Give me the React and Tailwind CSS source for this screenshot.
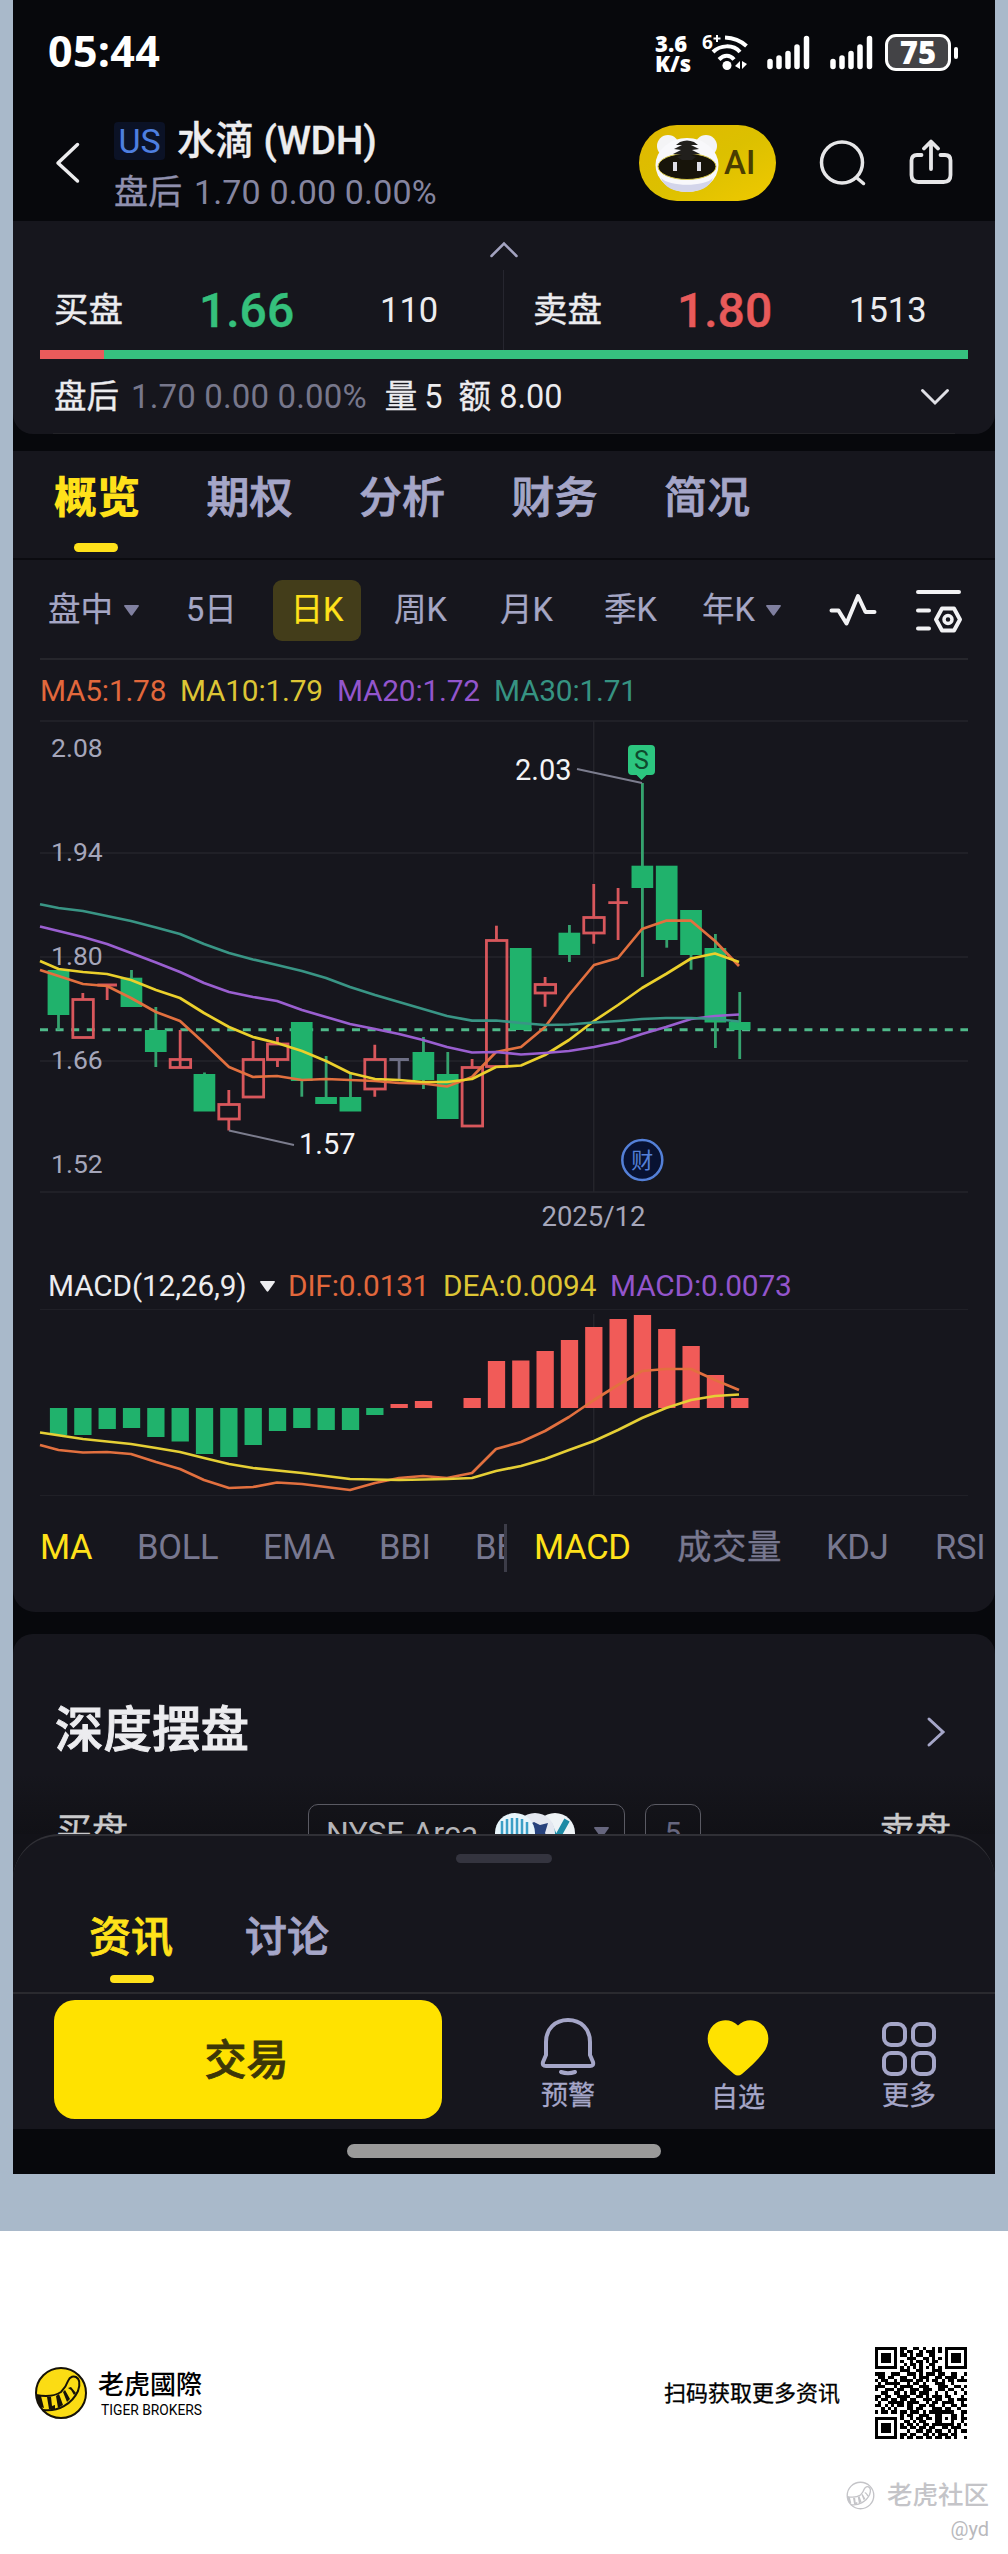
import React from 'react';

const MAIN_TABS = ['概览', '期权', '分析', '财务', '简况'];

// x of the first candle and distance between candles
const X0 = 58.5;
const STEP = 24.33;

// [kind, bodyTop, bodyBottom, wickTop, wickBottom]
const CANDLES = [
  ['g', 970, 1015, 970, 1030],
  ['r', 999, 1038, 993, 1038],
  ['rd', 985, 985, 985, 1000],
  ['g', 977.7, 1007, 970, 1007],
  ['g', 1030, 1052, 1007, 1067],
  ['r', 1059, 1068, 1030, 1059],
  ['g', 1074, 1111.5, 1072.5, 1111],
  ['r', 1104, 1119.5, 1090, 1130.5],
  ['r', 1059, 1097.5, 1041, 1097],
  ['r', 1043.5, 1060, 1037, 1067],
  ['g', 1022, 1081, 1022, 1096.7],
  ['g', 1097, 1104, 1056, 1104],
  ['g', 1097, 1111.5, 1072.7, 1111],
  ['r', 1059, 1089.5, 1044.7, 1096.7],
  ['n', 1059.5, 1059.5, 1059.5, 1081],
  ['g', 1052, 1080, 1037, 1089],
  ['g', 1074, 1119, 1052, 1119],
  ['r', 1067, 1126.5, 1059, 1126],
  ['r', 940, 1067, 925.7, 1067],
  ['g', 948, 1030, 948, 1030],
  ['r', 984, 993.5, 977, 1006.7],
  ['g', 932.7, 955, 925, 962],
  ['r', 917, 933.5, 884, 943.7],
  ['rd', 902.7, 902.7, 888, 940],
  ['g', 865.7, 888, 783, 977],
  ['g', 865.7, 940, 866, 947.7],
  ['g', 910, 955, 910, 969.7],
  ['g', 948, 1022.5, 934, 1048],
  ['g', 1022, 1030, 992, 1059],
];

const MA30 = '40,904.3 58.5,908 83,911 107,916 131,921 156,927.5 180,934 204,944 229,953 253,959.5 277,965 302,971 326,978 350,987 375,995 399,1002 423,1009 447,1016 472,1020.7 496,1020.5 521,1023 545,1025 569,1024.5 594,1022.5 618,1021 642,1019 666,1018 691,1018 715,1019 739,1021.5';
const MA20 = '40,926.5 83,937 107,944 131,953 156,962.5 180,972 204,983 229,992 253,997 277,1001 302,1010 326,1017 350,1024 375,1029 399,1034 423,1040 447,1047 472,1052.5 496,1052 521,1054.5 545,1053 569,1051 594,1047 618,1042 642,1034 666,1027 691,1019 715,1016 739,1014.5';
const MA10 = '40,961 58.5,969 83,972 107,974 131,980 156,990 180,998 204,1013 229,1027 253,1037 277,1043 302,1051 326,1061 350,1073 375,1079 399,1080 423,1082 447,1082 472,1079 496,1067 521,1065.5 545,1055 569,1040 594,1021 618,1005 642,988 666,974 691,958.5 715,953.5 739,962';
const MA5 = '40,970 58.5,976 83,984 107,986 131,998 156,1012 180,1021 204,1043 229,1067 253,1077 277,1076 302,1080 326,1079 350,1080 375,1081 399,1083 423,1083.5 447,1086.5 472,1077 496,1052 521,1047 545,1027 569,995 594,965 618,958 642,929 666,920.7 691,920.7 715,941 739,966';

const HIST = [-27, -27, -21, -20, -29, -33.5, -46, -49, -37, -23, -20, -22, -22, -7, 4, 7, 0, 10, 47, 47.5, 57, 68, 81, 89, 93, 79, 62, 33, 10];
const DIF = '40,1445 58.5,1450 83,1452.5 107,1452 131,1454 156,1462 180,1469 204,1480 229,1488 253,1487 277,1482.5 302,1484 326,1487 350,1490 375,1483 399,1478 423,1476 447,1478 472,1473 496,1449 521,1442 545,1431 569,1417 594,1400 618,1385 642,1371 666,1369 691,1369 715,1380 739,1390';
const DEA = '40,1432.5 83,1439 131,1444 156,1448 180,1452 204,1458 229,1464 253,1468 302,1473 350,1479 399,1480 447,1479 472,1478 496,1471 521,1466 545,1459 569,1450 594,1441 618,1430 642,1418 666,1408 691,1400 715,1396 739,1394.5';

const PRICES = [
  ['2.08', 757],
  ['1.94', 861],
  ['1.80', 965],
  ['1.66', 1068.5],
  ['1.52', 1172.5],
];

const QR = [
  '11111110110011010010101111111',
  '10000010101100101110101000001',
  '10111010110101100110001011101',
  '10111010001110011010101011101',
  '10111010100101101011001011101',
  '10000010010110100110001000001',
  '11111110101010101010101111111',
  '00000000111001100011100000000',
  '11100111001110101110110011001',
  '01101100110010111001101111010',
  '10110010111101101011010110111',
  '01011111001011010001110010000',
  '11100010111100111000111001101',
  '10011101100111011100110110010',
  '00110011010110111001001001001',
  '11011001111001101011101100010',
  '10110110110110011101100110111',
  '01001111101111001011011110010',
  '11010101101100110110010011011',
  '00101010001101100011101100100',
  '10110110110111010111111110011',
  '00000000101100111001100011010',
  '11111110100101101101101011011',
  '10000010011010110001100010010',
  '10111010101101011011111110101',
  '10111010110110110110011011100',
  '10111010001001101101100101011',
  '10000010110110011010111011000',
  '11111110101101101101101101001',
];

function StatusBar() {
  return (
    <div className="flex h-[98px] items-start pl-[35px] pr-[37px] pt-[34px] text-white">
      <div className="font-['Open_Sans'] text-[43px] font-bold leading-[34px] tracking-[0.3px]">05:44</div>
      <div className="ml-auto flex items-start">
        <div className="w-[47px] font-['Open_Sans'] text-[22px] font-extrabold leading-[20px]">
          <div className="-mt-px">3.6</div>
          <div>K/s</div>
        </div>
        <svg className="h-[38px] w-[50px] overflow-visible" viewBox="0 0 50 38" fill="none" stroke="#fff">
          <text x="0" y="15" fontSize="19" fontWeight="700" fontFamily="Open Sans" fill="#fff" stroke="none">6</text>
          <path d="M11.500 4.500h7M15 1v7" strokeWidth="2" />
          <path d="M23 3.500c8 .3 16 3.500 21.500 8.500" strokeWidth="4" />
          <path d="M11 18c7-7 20-8 27 0" strokeWidth="4" />
          <path d="M17 25.500c5-5 11-5 15 0" strokeWidth="4" />
          <circle cx="25" cy="31.500" r="4.500" fill="#fff" stroke="none" />
          <path d="M38 27v8l-5-3zM40 27v8l5-5z" fill="#fff" stroke="none" />
        </svg>
        <SignalBars className="ml-[15px]" />
        <SignalBars className="ml-[20px]" />
        <div className="ml-[12px] flex items-center">
          <div className="flex h-[37px] w-[66px] items-center justify-center rounded-[11px] border-[3px] border-white bg-[#434346] font-['Open_Sans'] text-[31px] font-extrabold leading-none">
            75
          </div>
          <div className="ml-[3px] h-[12px] w-[4px] rounded-full bg-white" />
        </div>
      </div>
    </div>
  );
}

function SignalBars({ className }) {
  return (
    <svg className={`h-[36px] w-[43px] ${className}`} viewBox="0 0 43 36" stroke="#fff" strokeWidth="5.500" strokeLinecap="round">
      <path d="M3 27.500v5M12 24v8.500M21 19.500v13M30 13v19.500M39.500 4.500v28" />
    </svg>
  );
}

function TigerBot() {
  return (
    <svg className="h-[62px] w-[68px]" viewBox="0 0 68 62">
      <circle cx="15" cy="14" r="11" fill="#f4f4f6" />
      <circle cx="53" cy="14" r="11" fill="#f4f4f6" />
      <ellipse cx="34" cy="33" rx="31.500" ry="27" fill="#f8f8fb" />
      <path d="M8 46c8 9 44 9 52 0-3 9-13 14-26 14S11 55 8 46z" fill="#d3d5ea" />
      <ellipse cx="34" cy="34.500" rx="29" ry="13" fill="#17140a" stroke="#d9c94a" strokeWidth="1" />
      <path d="M27 10q7-3 14 0l4 3-7 0 8 4-7 1 8 4-9 1 5 2-4 3H29l-5-3 5-2-9-1 8-4-7-1 8-4-6 0z" fill="#211f1c" />
      <rect x="20" y="30" width="4" height="9" fill="#dedee6" />
      <rect x="44" y="30" width="4" height="9" fill="#dedee6" />
    </svg>
  );
}

function Header() {
  return (
    <div className="flex h-[123px] items-start">
      <svg className="ml-[42px] mt-[44px] h-[42px] w-[26px]" viewBox="0 0 26 42" fill="none" stroke="#ececee" strokeWidth="3.5" strokeLinecap="round" strokeLinejoin="round">
        <path d="M22.500 2.500L3 21l19.500 18" />
      </svg>
      <div className="ml-[33px] mt-[20px] whitespace-nowrap">
        <div className="flex h-[46px] items-center">
          <div className="flex h-[38px] w-[51px] items-center justify-center rounded-[4px] bg-[#0b1226] text-[34px] leading-none text-[#4e7fe0]">US</div>
          <div className="ml-[12px] text-[38.500px] font-medium leading-none text-[#ededef] [-webkit-text-stroke:0.4px]">水滴 (WDH)</div>
        </div>
        <div className="mt-[5px] text-[34px] leading-[46px] tracking-[0.150px] text-[#8585a0]">
          <span className="text-[#8f90ae] [-webkit-text-stroke:0.3px]">盘后</span> <span className="ml-[3px]">1.70 0.00 0.00%</span>
        </div>
      </div>
      <div className="ml-auto mt-[27px] flex h-[76px] w-[137px] items-center rounded-full bg-linear-to-br from-[#e0b800] via-[#dcc000] to-[#efc900] pl-[14px] text-[33px] text-[#4a3d00]">
        <TigerBot />
        <span className="ml-[3px] font-medium">AI</span>
      </div>
      <svg className="ml-[43px] mt-[42px] h-[47px] w-[47px]" viewBox="0 0 47 47" fill="none" stroke="#e6e6e8" strokeWidth="3.500" strokeLinecap="round">
        <circle cx="23" cy="22.500" r="20.500" />
        <path d="M38 38l6.500 5.500" />
      </svg>
      <svg className="ml-[43px] mr-[42px] mt-[41px] h-[46px] w-[44px]" viewBox="0 0 44 46" fill="none" stroke="#e6e6e8" strokeWidth="3.800" strokeLinecap="round" strokeLinejoin="round">
        <path d="M12.500 16H8q-5.500 0-5.500 5.500V36q0 7 7 7h25q7 0 7-7V21.500Q41.500 16 36 16h-4.500" />
        <path d="M22 30V3M15 9.500L22 2.500l7 7" />
      </svg>
    </div>
  );
}

function QuoteCard() {
  return (
    <div className="h-[213px] rounded-b-[20px] bg-[#16161d] text-[#ececef]">
      <div className="flex h-[49px] justify-center pt-[19px]">
        <svg className="h-[18px] w-[30px]" viewBox="0 0 30 18" fill="none" stroke="#a3a3c0" strokeWidth="2.500" strokeLinecap="round">
          <path d="M2.500 16L15 3.500 27.500 16" />
        </svg>
      </div>
      <div className="flex h-[80px] items-center">
        <div className="flex h-full w-[491px] items-center border-r border-[#26262f] pl-[41px] pt-[2px]">
          <span className="w-[145px] text-[34.500px] [-webkit-text-stroke:0.4px]">买盘</span>
          <span className="w-[181px] text-[48px] font-medium leading-none text-[#35c07c] [-webkit-text-stroke:0.4px]">1.66</span>
          <span className="text-[34.500px]">110</span>
        </div>
        <div className="flex items-center pl-[29px] pt-[2px]">
          <span className="w-[144px] text-[34.500px] [-webkit-text-stroke:0.4px]">卖盘</span>
          <span className="w-[172px] text-[48px] font-medium leading-none text-[#e85a5a] [-webkit-text-stroke:0.4px]">1.80</span>
          <span className="text-[34.500px]">1513</span>
        </div>
      </div>
      <div className="mx-[27px] flex h-[9px]">
        <div className="w-[64px] bg-[#ea5b5b]" />
        <div className="flex-1 bg-[#36c07f]" />
      </div>
      <div className="flex h-[74px] items-center whitespace-pre pl-[41px] pr-[45px] pt-[2px] text-[32.500px]">
        <span className="[-webkit-text-stroke:0.4px]">盘后</span>
        <span className="ml-[12px] text-[33px] tracking-[0.150px] text-[#77778b]">1.70 0.00 0.00%</span>
        <span className="ml-[18px] [-webkit-text-stroke:0.4px]">量</span>
        <span className="ml-[7px]">5</span>
        <span className="ml-[16px] [-webkit-text-stroke:0.4px]">额</span>
        <span className="ml-[8px]">8.00</span>
        <svg className="ml-auto h-[19px] w-[30px]" viewBox="0 0 30 19" fill="none" stroke="#e0e0e6" strokeWidth="3" strokeLinecap="round">
          <path d="M2.500 2.500L15 15 27.500 2.500" />
        </svg>
      </div>
      <div className="mx-[40px] h-px bg-[#222227]" />
    </div>
  );
}

function Caret({ className }) {
  return (
    <svg className={`h-[11px] w-[15px] ${className}`} viewBox="0 0 15 11" fill="currentColor">
      <path d="M1 0h13q1.500 0 .6 1.500L8.500 10q-1 1.300-2 0L.4 1.500Q-.5 0 1 0z" />
    </svg>
  );
}

function IntervalRow() {
  return (
    <div className="flex h-[98px] items-center pt-[2px] text-[32.500px] text-[#a5a6c4] [-webkit-text-stroke:0.2px]">
      <div className="flex w-[137px] items-center pl-[35px]">盘中<Caret className="ml-[11px] text-[#8080a0]" /></div>
      <div className="w-[123px] pl-[36px]">5日</div>
      <div className="flex h-[61px] w-[88px] items-center justify-center rounded-[9px] bg-[#433d1a] text-[#ffe11a]">日K</div>
      <div className="ml-[33px] w-[106px]">周K</div>
      <div className="w-[104px]">月K</div>
      <div className="w-[98px]">季K</div>
      <div className="flex w-[127px] items-center">年K<Caret className="ml-[11px] text-[#8080a0]" /></div>
      <svg className="h-[36px] w-[48px]" viewBox="0 0 48 36" fill="none" stroke="#f2f2f4" strokeWidth="4" strokeLinecap="round" strokeLinejoin="round">
        <path d="M2.500 18.500h7l8 13L29 4l7.500 16h9" />
      </svg>
      <svg className="ml-[38px] h-[45px] w-[48px]" viewBox="0 0 48 45" fill="none" stroke="#f2f2f4" strokeWidth="4" strokeLinecap="round" strokeLinejoin="round">
        <path d="M3 4h41M3 22.500h11M3 40.500h11" />
        <path d="M27 20.500h12l6 11-6 11H27l-6-11z" />
        <circle cx="33" cy="31.500" r="4" strokeWidth="3.500" />
      </svg>
    </div>
  );
}

function PriceChart() {
  return (
    <svg className="h-[536px] w-[982px]" viewBox="13 720 982 536" fontFamily="Roboto, 'Noto Sans CJK SC', sans-serif">
      <g stroke="#24242b" strokeWidth="1.500">
        {[721, 853, 957, 1061, 1192].map((y) => (
          <path key={y} d={`M40 ${y}H968`} />
        ))}
        <path d="M593.700 721V1192" />
      </g>
      <path d="M40 1029.700H968" stroke="#4fb98a" strokeWidth="3" strokeDasharray="8 7.600" />
      {CANDLES.map(([kind, top, bottom, high, low], i) => {
        const x = X0 + i * STEP;
        if (kind === 'g') {
          return (
            <g key={i}>
              <path d={`M${x} ${high}V${low}`} stroke="#35a36e" strokeWidth="2.800" />
              <rect x={x - 10.9} y={top} width="21.700" height={bottom - top} fill="#20b26c" />
            </g>
          );
        }
        if (kind === 'r') {
          return (
            <g key={i} stroke="#d8575c" strokeWidth="2.800" fill="none">
              <path d={`M${x} ${high}V${top}M${x} ${bottom}V${low}`} />
              <rect x={x - 10} y={top + 0.5} width="20.500" height={bottom - top - 1} />
            </g>
          );
        }
        return (
          <path key={i} d={`M${x - 9.8} ${top}h19.600M${x} ${high}V${low}`} stroke={kind === 'n' ? '#6e6f85' : '#d8575c'} strokeWidth="2.800" />
        );
      })}
      <g fill="none" strokeWidth="2.700" strokeLinejoin="round">
        <polyline points={MA5} stroke="#e2703f" />
        <polyline points={MA10} stroke="#ebd02c" />
        <polyline points={MA20} stroke="#9a5fd0" />
        <polyline points={MA30} stroke="#399585" />
      </g>
      <g fill="#a5a6ba" fontSize="26.500">
        {PRICES.map(([label, y]) => (
          <text key={label} x="51" y={y}>{label}</text>
        ))}
        <text x="593.500" y="1225.500" fontSize="27.500" textAnchor="middle">2025/12</text>
      </g>
      <path d="M577 769l65 14M229 1130.500l65 14.500" stroke="#7c7d8e" strokeWidth="2" />
      <g fill="#f4f4f6" fontSize="29">
        <text x="515" y="779.500">2.03</text>
        <text x="299" y="1154">1.57</text>
      </g>
      <path d="M632 745h19q4 0 4 4v22q0 4-4 4h-4.500l-5 5-5-5H632q-4 0-4-4v-22q0-4 4-4z" fill="#2cc67f" />
      <text x="641.500" y="769" fontSize="25" textAnchor="middle" fill="#0e4a2d">S</text>
      <circle cx="642.300" cy="1160" r="20" fill="#081232" stroke="#5480d8" strokeWidth="2.500" />
      <text x="642.300" y="1168" fontSize="22" textAnchor="middle" fill="#5480d8">财</text>
    </svg>
  );
}

function MacdChart() {
  return (
    <svg className="h-[190px] w-[982px]" viewBox="13 1308 982 190">
      <path d="M40 1309.500H968M40 1495.500H968" stroke="#202027" strokeWidth="1.200" />
      <path d="M593.700 1314V1495" stroke="#24242b" strokeWidth="1.500" />
      {HIST.map((v, i) => (
        <rect
          key={i}
          x={X0 + i * STEP - 8.6}
          y={v > 0 ? 1408 - v : 1408}
          width="17.300"
          height={Math.abs(v)}
          fill={v > 0 ? '#f15b58' : '#20b26c'}
        />
      ))}
      <g fill="none" strokeWidth="2.700" strokeLinejoin="round">
        <polyline points={DIF} stroke="#e2703f" />
        <polyline points={DEA} stroke="#e5cf35" />
      </g>
    </svg>
  );
}

function ChartCard() {
  return (
    <div className="h-[1161px] rounded-b-[22px] bg-[#16161d]">
      <div className="flex h-[109px] border-b-2 border-[#0b0b10] pl-[41px]">
        {MAIN_TABS.map((tab, i) => (
          <div
            key={tab}
            className={`w-[152.500px] text-[43px] leading-[94px] ${i === 0 ? 'font-black text-[#ffe11a]' : 'font-medium text-[#a5a6c8] [-webkit-text-stroke:0.8px]'}`}
          >
            <div className="h-[92px]">{tab}</div>
            {i === 0 && <div className="ml-[20px] h-[9px] w-[44px] rounded-full bg-[#ffe11a]" />}
          </div>
        ))}
      </div>
      <IntervalRow />
      <div className="mx-[27px] flex h-[62px] items-center border-t-2 border-[#26262c] pt-[3px] text-[29.800px] tracking-[-0.200px]">
        <span className="w-[140px] text-[#e2683c]">MA5:1.78</span>
        <span className="w-[157px] text-[#ddc535]">MA10:1.79</span>
        <span className="w-[157px] text-[#9355cc]">MA20:1.72</span>
        <span className="text-[#369382]">MA30:1.71</span>
      </div>
      <PriceChart />
      <div className="flex h-[52px] items-center whitespace-nowrap pl-[35px] pt-[8px] text-[29.800px] tracking-[-0.150px]">
        <div className="flex w-[240px] items-center text-[#ececef]">MACD(12,26,9)<Caret className="ml-[13px]" /></div>
        <span className="w-[155px] text-[#e2683c]">DIF:0.0131</span>
        <span className="w-[167px] text-[#ddc535]">DEA:0.0094</span>
        <span className="text-[#9355cc]">MACD:0.0073</span>
      </div>
      <MacdChart />
      <div className="flex h-[98px] items-center overflow-hidden pt-[2px] text-[34.500px] tracking-[-0.300px] text-[#787890]">
        <div className="flex w-[491px] overflow-hidden whitespace-nowrap pl-[27px]">
          <span className="w-[97px] shrink-0 text-[#ffe11a]">MA</span>
          <span className="w-[126px] shrink-0">BOLL</span>
          <span className="w-[116px] shrink-0">EMA</span>
          <span className="w-[96px] shrink-0">BBI</span>
          <span>BB</span>
        </div>
        <div className="h-[48px] w-[3px] bg-[#3c3c48]" />
        <div className="flex flex-1 whitespace-nowrap pl-[27px]">
          <span className="w-[143px] shrink-0 text-[#ffe11a]">MACD</span>
          <span className="w-[149px] shrink-0 tracking-[0.500px] [-webkit-text-stroke:0.3px]">成交量</span>
          <span className="w-[109px] shrink-0">KDJ</span>
          <span>RSI</span>
        </div>
      </div>
    </div>
  );
}

function ExchangeLogos() {
  return (
    <svg className="h-[42px] w-[82px]" viewBox="0 0 82 42">
      <circle cx="61" cy="21" r="20" fill="#eef3f6" />
      <path d="M55 12l7 16L73 8" stroke="#1d8aa5" strokeWidth="6" fill="none" />
      <circle cx="41" cy="21" r="20" fill="#e4e8f0" />
      <path d="M32 14l8-4 6 3 8-2-3 10 4 8-8 4-8-6z" fill="#27427c" />
      <circle cx="21" cy="21" r="20" fill="#e8f5fb" />
      <path d="M8 9v24M13 7v28M18 6v30M23 6v30M28 7v28M33 10v22" stroke="#3c9fc6" strokeWidth="2.500" />
    </svg>
  );
}

function DepthCard() {
  return (
    <div className="mt-[22px] h-[200px] overflow-hidden rounded-t-[20px] bg-linear-to-b from-[#16161d] from-70% to-[#111116] text-[#ececef]">
      <div className="flex h-[170px] items-center pl-[42px] pr-[49px] pt-[25px]">
        <span className="text-[48.500px] font-medium [-webkit-text-stroke:0.9px]">深度摆盘</span>
        <svg className="ml-auto h-[32px] w-[20px]" viewBox="0 0 20 32" fill="none" stroke="#a5a6c8" strokeWidth="3" strokeLinecap="round">
          <path d="M3 3l14 13L3 29" />
        </svg>
      </div>
      <div className="flex h-[60px] items-start pl-[43px] text-[36px]">
        <span className="w-[252px] pt-[6px] leading-[44px] text-[#c9c9cb] [-webkit-text-stroke:0.4px]">买盘</span>
        <div className="flex h-[62px] w-[317px] items-start rounded-[10px] border border-[#5a5a63] pl-[17px] pt-[7px] text-[32px] leading-[42px] text-[#b4b4b8]">
          NYSE Arca
          <span className="ml-[16px]"><ExchangeLogos /></span>
          <Caret className="ml-[18px] mt-[15px] text-[#66667e]" />
        </div>
        <div className="ml-[20px] flex h-[62px] w-[56px] justify-center rounded-[10px] border border-[#5a5a63] pt-[7px] text-[30px] leading-[42px] text-[#66667e]">5</div>
        <span className="ml-[178px] pt-[6px] leading-[44px] text-[#c9c9cb] [-webkit-text-stroke:0.4px]">卖盘</span>
      </div>
    </div>
  );
}

function NewsSheet() {
  return (
    <div className="bg-[#121218]">
      <div className="h-[158px] rounded-t-[46px] border-t-2 border-[#303036] bg-[#16161d] text-[42px] font-medium">
        <div className="mx-auto mt-[18px] h-[9px] w-[96px] rounded-full bg-[#34343f]" />
        <div className="flex pl-[76px] pt-[36px] leading-[78px] [-webkit-text-stroke:0.8px]">
          <div className="w-[156px] text-[#ffe11a]">
            <div className="h-[76px]">资讯</div>
            <div className="ml-[21px] h-[8px] w-[44px] rounded-full bg-[#ffe11a]" />
          </div>
          <div className="text-[#a5a6c8]">讨论</div>
        </div>
      </div>
    </div>
  );
}

function ActionBar() {
  return (
    <div className="flex h-[137px] items-start border-t-2 border-[#2a2a2f] bg-[#16161d] pl-[41px] pt-[6px] text-[27px] text-[#a5a6c8]">
      <div className="flex h-[119px] w-[388px] items-center justify-center rounded-[21px] bg-[#ffe200] pr-[3px] pt-[2px] text-[42px] font-medium text-[#3d3708] [-webkit-text-stroke:0.8px]">交易</div>
      <div className="ml-[69px] flex w-[114px] flex-col items-center pt-[17px]">
        <svg className="h-[60px] w-[56px]" viewBox="0 0 56 60" fill="none" stroke="#a5a6c8" strokeWidth="4" strokeLinejoin="round" strokeLinecap="round">
          <path d="M28 3C15 3 6 12 6 25v13l-3 7q-1 4 3 4h44q4 0 3-4l-3-7V25C50 12 41 3 28 3z" />
          <path d="M21 55q7 2.500 14 0" />
        </svg>
        <span className="mt-[-1px] leading-[40px] [-webkit-text-stroke:0.3px]">预警</span>
      </div>
      <div className="ml-[56px] flex w-[114px] flex-col items-center pt-[19px]">
        <svg className="h-[58px] w-[62px]" viewBox="0 0 62 58" fill="#ffe200">
          <path d="M31 6.500C37 .5 46-.5 53 4c10 7 11 20 3 30-6 8-14 15-21 21q-4 3-8 0C20 49 12 42 6 34-2 24-1 11 9 4c7-4.500 16-3.500 22 2.500z" />
        </svg>
        <span className="mt-[1px] leading-[40px] [-webkit-text-stroke:0.3px]">自选</span>
      </div>
      <div className="ml-[57px] flex w-[114px] flex-col items-center pt-[22px]">
        <svg className="h-[54px] w-[54px]" viewBox="0 0 54 54" fill="none" stroke="#a5a6c8" strokeWidth="4">
          <rect x="2" y="2" width="21" height="21" rx="7" />
          <rect x="31" y="2" width="21" height="21" rx="7" />
          <rect x="2" y="31" width="21" height="21" rx="7" />
          <rect x="31" y="31" width="21" height="21" rx="7" />
        </svg>
        <span className="leading-[40px] [-webkit-text-stroke:0.3px]">更多</span>
      </div>
    </div>
  );
}

function TigerTail({ className, ring, body, face, sw }) {
  return (
    <svg className={className} viewBox="0 0 54 54">
      <circle cx="27" cy="27" r={26 - sw / 2} fill={face} stroke={ring} strokeWidth={sw} />
      <path d="M2 29q16 3 25-3 5-5 7-11c2-5 6-5 8-4 4 2 4 8 2 14C38 38 24 46 9 44" fill="none" stroke={body} strokeWidth={sw} />
      <path d="M3 29l4 1 3 12-4-1C4 38 2 34 3 29zM13 31h4l1 9 3-1 0 4h-6zM22 30l3-2 4 11-5 3zM29 26l2-2 5 9-3 3zM34 22l3-1 5 6-2 2-3-5z" fill={body} />
    </svg>
  );
}

function QrCode() {
  return (
    <svg className="h-[92px] w-[92px]" viewBox="0 0 29 29" shapeRendering="crispEdges">
      {QR.map((row, y) =>
        [...row].map((c, x) => (c === '1' ? <rect key={`${x}-${y}`} x={x} y={y} width="1" height="1" fill="#000" /> : null))
      )}
    </svg>
  );
}

function Footer() {
  return (
    <div className="h-[323px] bg-white text-black">
      <div className="flex h-[208px] items-end pl-[34px] pr-[41px]">
        <div className="flex h-[92px] w-full items-center">
          <TigerTail className="h-[54px] w-[54px]" ring="#161208" body="#161208" face="#fbdc14" sw={2} />
          <div className="ml-[10px] flex flex-col">
            <span className="text-[26px] font-medium leading-[34px]">老虎國際</span>
            <span className="ml-[3px] text-[13.800px] leading-[16px]">TIGER BROKERS</span>
          </div>
          <span className="ml-auto mr-[35px] pt-[2px] text-[22px] leading-none [-webkit-text-stroke:0.3px]">扫码获取更多资讯</span>
          <QrCode />
        </div>
      </div>
      <div className="mt-[38px] flex items-center justify-end pr-[19px]">
        <TigerTail className="h-[29px] w-[29px]" ring="#c4c4c8" body="#c4c4c8" face="#ffffff" sw={2.5} />
        <span className="ml-[12px] text-[25.500px] font-medium leading-[36px] text-[#c4c4c8]">老虎社区</span>
      </div>
      <div className="pr-[19px] text-right text-[20px] leading-[32px] text-[#b9b9bd]">@yd</div>
    </div>
  );
}

export default function App() {
  return (
    <div className="h-[2554px] w-[1008px] overflow-hidden bg-[#a9b9ca] font-[Roboto,'Noto_Sans_CJK_SC',sans-serif]">
      <div className="mx-[13px] h-[2174px] overflow-hidden bg-[#07080c]">
        <StatusBar />
        <Header />
        <QuoteCard />
        <div className="h-[17px]" />
        <ChartCard />
        <DepthCard />
        <NewsSheet />
        <ActionBar />
        <div className="flex justify-center pt-[15px]">
          <div className="h-[14px] w-[314px] rounded-full bg-[#9a9a9a]" />
        </div>
      </div>
      <div className="h-[57px]" />
      <Footer />
    </div>
  );
}
